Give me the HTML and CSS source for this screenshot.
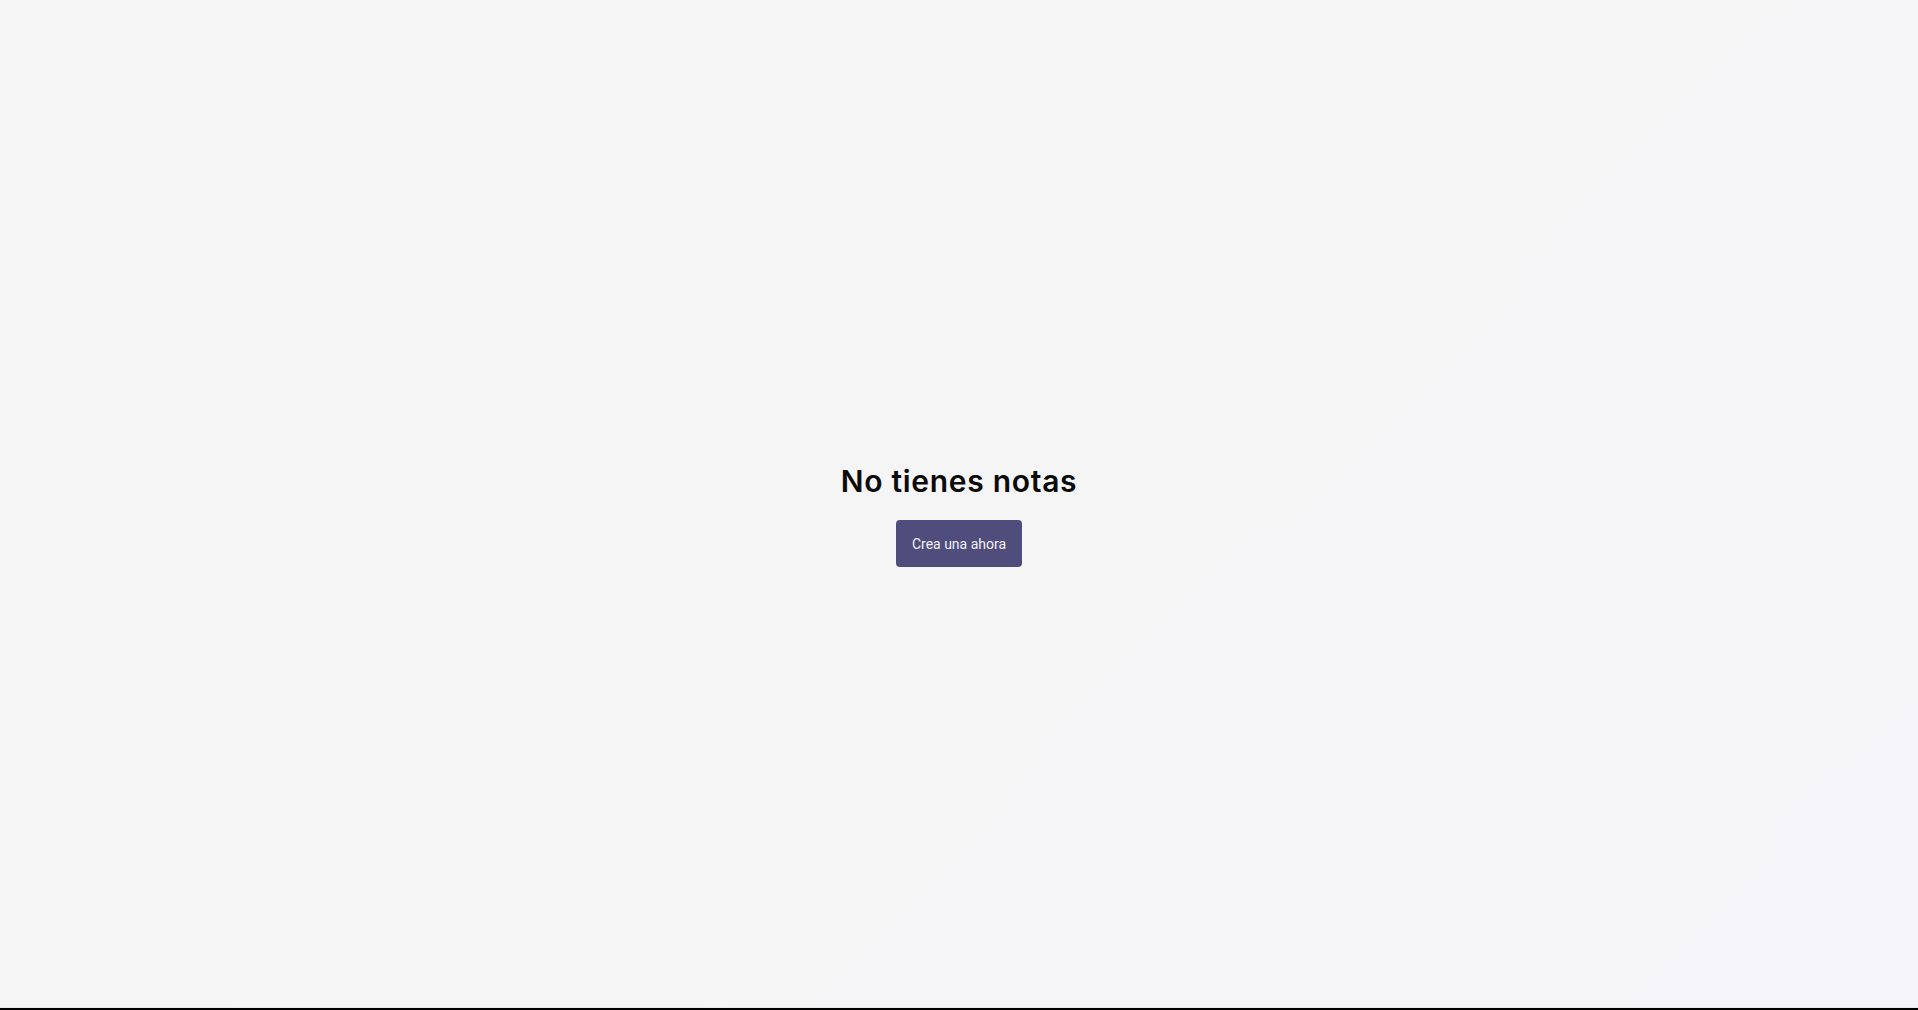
FILE: index.html
```html
<!DOCTYPE html>
<html lang="es">
<head>
<meta charset="utf-8">
<title>Notas</title>
<link rel="stylesheet" href="styles.css">
</head>
<body>
<main class="page">
  <section class="empty">
    <h1 class="empty-title">No tienes notas</h1>
    <button class="btn-primary" type="button">Crea una ahora</button>
  </section>
</main>
<div class="bottom-bar"></div>
</body>
</html>
```
FILE: styles.css
```css
html, body {
  margin: 0;
  padding: 0;
}
body {
  background: #f5f5f5;
  font-family: Inter, "Noto Sans", sans-serif;
}
.page {
  height: 1007px;
  box-sizing: border-box;
  padding-top: 23px;
  display: flex;
  align-items: center;
  justify-content: center;
  background: linear-gradient(135deg, #f5f5f5 0%, #f5f5f5 40%, #f5f4f8 100%);
}
.empty {
  display: flex;
  flex-direction: column;
  align-items: center;
}
.empty-title {
  margin: 0 0 21px;
  font-size: 30px;
  line-height: 36px;
  font-weight: 600;
  letter-spacing: 0.7px;
  color: #0b0b0b;
}
.btn-primary {
  height: 47px;
  padding: 0 16px;
  border: none;
  border-radius: 4px;
  background: #4f4d7c;
  color: #f3f2fa;
  font-family: Roboto, "Liberation Sans", sans-serif;
  font-size: 14px;
  cursor: pointer;
}
.bottom-bar {
  height: 2px;
  background: #000;
  border-top: 1px solid #ebebeb;
}
```
